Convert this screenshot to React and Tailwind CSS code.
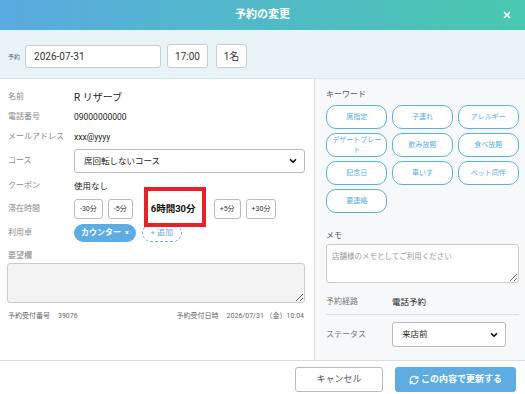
import { ChevronDown, X, RefreshCw } from 'lucide-react';

const keywords = [
  '席指定', '子連れ', 'アレルギー',
  'デザートプレート', '飲み放題', '食べ放題',
  '記念日', '車いす', 'ペット同伴',
  '要連絡',
];

function Row({ label, children, className = '' }) {
  return (
    <div className={`flex items-center ${className}`}>
      <div className="w-[66px] shrink-0 text-[8px] text-[#888]">{label}</div>
      {children}
    </div>
  );
}

function StepButton({ children }) {
  return (
    <button className="h-5 px-[5px] rounded-[3px] border border-[#bbb] bg-white text-[7px] text-[#333]">
      {children}
    </button>
  );
}

export default function App() {
  return (
    <div
      className="w-[525px] h-[394px] overflow-hidden bg-white flex flex-col"
      style={{ fontFamily: 'Roboto, "Noto Sans CJK JP", sans-serif' }}
    >
      {/* Header */}
      <div className="h-[30px] shrink-0 relative flex items-center justify-center bg-gradient-to-r from-[#5aaae0] to-[#48c8ae]">
        <span className="text-white font-bold text-[11px]">予約の変更</span>
        <X className="absolute right-[13px] text-white" size={10} strokeWidth={4} />
      </div>

      {/* Reservation bar */}
      <div className="h-[49px] shrink-0 bg-[#e8f3f8] border-b border-[#d4e6ee] flex items-center pl-[8px] pt-[4px]">
        <span className="text-[6px] text-[#666] mr-[5px]">予約</span>
        <div className="w-[136px] h-[23px] bg-white border border-[#ccc] rounded-[3px] flex items-center px-2 text-[10px] text-[#333]">
          2026-07-31
        </div>
        <div className="ml-[6px] w-[41px] h-[24px] bg-white border border-[#ccc] rounded-[3px] flex items-center justify-center text-[10px] text-[#333]">
          17:00
        </div>
        <div className="ml-[8px] w-[31px] h-[24px] bg-white border border-[#ccc] rounded-[3px] flex items-center justify-center text-[10px] text-[#333]">
          1名
        </div>
      </div>

      {/* Body */}
      <div className="flex flex-1 min-h-0">
        {/* Left panel */}
        <div className="w-[315px] shrink-0 border-r border-[#ddd] pl-[8px] pr-[9px] pt-[8px]">
          <Row label="名前" className="h-5">
            <span className="text-[10px] text-[#222]">R リザーブ</span>
          </Row>
          <Row label="電話番号" className="h-5">
            <span className="text-[8.5px] text-[#222]">09000000000</span>
          </Row>
          <Row label="メールアドレス" className="h-5">
            <span className="text-[8.5px] text-[#222]">xxx@yyyy</span>
          </Row>
          <Row label="コース" className="h-6 mt-[2px]">
            <div className="flex-1 h-6 border border-[#bbb] rounded-[3px] flex items-center justify-between pl-[9px] pr-[6px]">
              <span className="text-[8.5px] text-[#222]">席回転しないコース</span>
              <ChevronDown size={10} strokeWidth={4} className="text-[#111]" />
            </div>
          </Row>
          <Row label="クーポン" className="h-5 mt-[3px]">
            <span className="text-[8.5px] text-[#222]">使用なし</span>
          </Row>
          <Row label="滞在時間" className="h-5 mt-[3px]">
            <div className="flex items-center gap-[5px]">
              <StepButton>-30分</StepButton>
              <StepButton>-5分</StepButton>
            </div>
            <div className="relative w-[81px] h-5 flex items-center pl-[18px]">
              <span className="text-[9.5px] font-bold text-[#111]">6時間30分</span>
              <div className="absolute left-[11px] top-[-12px] w-[62px] h-[40px] border-[4px] border-[#e8202a]" />
            </div>
            <div className="flex items-center gap-[5px]">
              <StepButton>+5分</StepButton>
              <StepButton>+30分</StepButton>
            </div>
          </Row>
          <Row label="利用卓" className="h-[18px] mt-[5px]">
            <div className="h-[18px] px-[7px] rounded-full bg-[#5dade2] text-white text-[8px] font-bold flex items-center gap-[4px]">
              カウンター <span className="text-[7px]">×</span>
            </div>
            <div className="ml-[6px] h-[18px] w-[40px] rounded-full border border-dashed border-[#5dade2] text-[#5dade2] text-[8px] flex items-center justify-center">
              + 追加
            </div>
          </Row>
          <div className="mt-[8px] text-[8px] text-[#888] leading-[12px]">要望欄</div>
          <textarea
            className="mt-[1px] w-[298px] h-[40px] -ml-[1px] block bg-[#f3f3f3] border border-[#ccc] rounded-[3px] resize-y"
            readOnly
          />
          <div className="mt-[8px] flex items-center justify-between text-[7px] text-[#666] pr-[1px]">
            <span>予約受付番号<span className="ml-[8px]">39076</span></span>
            <span>予約受付日時<span className="ml-[8px]">2026/07/31 （金）10:04</span></span>
          </div>
        </div>

        {/* Right panel */}
        <div className="flex-1 bg-[#f7f8fa] pl-[11px] pr-[6px] pt-[10px]">
          <div className="text-[8px] text-[#555] leading-[12px]">キーワード</div>
          <div className="mt-[4px] grid grid-cols-3 gap-x-[4.5px] gap-y-[4px]">
            {keywords.map((k) => (
              <div
                key={k}
                className="min-h-[24px] px-[4px] py-[1px] rounded-[10px] border border-[#5dade2] bg-white text-[#5dade2] text-[7px] leading-[10px] flex items-center justify-center text-center"
              >
                {k}
              </div>
            ))}
          </div>
          <div className="mt-[17px] text-[8px] text-[#555] leading-[12px]">メモ</div>
          <textarea
            className="mt-[2px] w-[193px] h-[39px] block bg-white border border-[#ccc] rounded-[3px] px-[5px] py-[6px] text-[7.5px] placeholder-[#999] resize-y"
            placeholder="店舗様のメモとしてご利用ください"
            readOnly
          />
          <div className="mt-[13px] flex items-center h-[12px]">
            <span className="w-[66px] text-[8px] text-[#777]">予約経路</span>
            <span className="text-[8.5px] text-[#222]">電話予約</span>
          </div>
          <div className="mt-[6px] w-[193px] border-t border-[#ddd]" />
          <div className="mt-[7px] flex items-center">
            <span className="w-[66px] text-[8px] text-[#777]">ステータス</span>
            <div className="w-[114px] h-[25px] bg-white border border-[#bbb] rounded-[3px] flex items-center justify-between pl-[9px] pr-[6px]">
              <span className="text-[8.5px] text-[#222]">来店前</span>
              <ChevronDown size={10} strokeWidth={4} className="text-[#111]" />
            </div>
          </div>
        </div>
      </div>

      {/* Footer */}
      <div className="h-[34px] shrink-0 border-t border-[#ddd] flex items-start justify-end gap-[12px] pt-[6px] pr-[9px]">
        <button className="w-[88px] h-[25px] rounded-[3px] border border-[#bbb] bg-white text-[9px] text-[#555]">
          キャンセル
        </button>
        <button className="w-[121px] h-[25px] rounded-[3px] bg-[#5dade2] text-white text-[9px] font-bold flex items-center justify-center gap-[2px]">
          <RefreshCw size={10} strokeWidth={3} />
          この内容で更新する
        </button>
      </div>
    </div>
  );
}
